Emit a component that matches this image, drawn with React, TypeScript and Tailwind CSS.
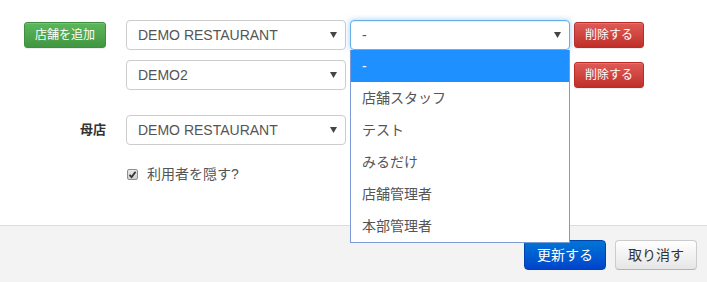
import React from "react";

const FONT = '"Liberation Sans", "Noto Sans CJK JP", Arial, sans-serif';

function Arrow() {
  return (
    <svg width="7" height="6" viewBox="0 0 7 6" className="absolute right-[8px] top-1/2 -translate-y-1/2">
      <path d="M0 0 L7 0 L3.5 6 Z" fill="#444" />
    </svg>
  );
}

function Select({ value, focused }: { value: string; focused?: boolean }) {
  return (
    <div
      className={
        "relative w-[220px] h-[30px] rounded-[4px] border bg-white flex items-center pl-[11px] text-[14px] text-[#555] " +
        (focused
          ? "border-[#66afe9] shadow-[inset_0_1px_1px_rgba(0,0,0,0.075),0_0_6px_rgba(102,175,233,0.6)]"
          : "border-[#cccccc]")
      }
    >
      {value ? <span>{value}</span> : null}
      <Arrow />
    </div>
  );
}

function RedButton() {
  return (
    <button className="ml-[4px] w-[70px] h-[26px] rounded-[3px] border border-[#b92c28] bg-gradient-to-b from-[#df5a56] to-[#c12e2a] text-white text-[12px] flex items-center justify-center shadow-[inset_0_1px_0_rgba(255,255,255,0.15),0_1px_1px_rgba(0,0,0,0.075)]">
      削除する
    </button>
  );
}

const items = ["-", "店舗スタッフ", "テスト", "みるだけ", "店舗管理者", "本部管理者"];

export default function App() {
  return (
    <div className="w-[707px] h-[282px] bg-white flex flex-col" style={{ fontFamily: FONT }}>
      <div className="flex-1 pt-[20px] flex flex-col">
        {/* Row 1 */}
        <div className="flex items-center h-[30px]">
          <div className="w-[106px] pl-[24px] flex">
            <button className="w-[82px] h-[26px] rounded-[3px] border border-[#3e8f3e] bg-gradient-to-b from-[#5cb85c] to-[#419641] text-white text-[12px] flex items-center justify-center shadow-[inset_0_1px_0_rgba(255,255,255,0.15),0_1px_1px_rgba(0,0,0,0.075)]">
              店舗を追加
            </button>
          </div>
          <div className="ml-[20px]">
            <Select value="DEMO RESTAURANT" />
          </div>
          <div className="ml-[4px] relative z-10">
            <Select value="-" focused />
            <div className="absolute left-0 top-[30px] w-[220px] bg-white border border-[#7c9ad4] border-t-0">
              {items.map((it, i) => (
                <div
                  key={it}
                  className={
                    "h-[32px] flex items-center pl-[11px] text-[14px] " +
                    (i === 0 ? "bg-[#1e90ff] text-white" : "text-[#555]")
                  }
                >
                  {it}
                </div>
              ))}
            </div>
          </div>
          <RedButton />
        </div>

        {/* Row 2 */}
        <div className="flex items-center h-[30px] mt-[10px]">
          <div className="w-[106px]" />
          <div className="ml-[20px]">
            <Select value="DEMO2" />
          </div>
          <div className="ml-[4px]">
            <Select value="" />
          </div>
          <RedButton />
        </div>

        {/* Row 3 */}
        <div className="flex items-center h-[30px] mt-[25px]">
          <div className="w-[106px] text-right text-[13px] font-bold text-[#333]">母店</div>
          <div className="ml-[20px]">
            <Select value="DEMO RESTAURANT" />
          </div>
        </div>

        {/* Checkbox */}
        <div className="flex items-center h-[20px] mt-[19px] pl-[127px]">
          <span className="w-[11px] h-[11px] border border-[#8f8f8f] rounded-[2px] bg-gradient-to-b from-[#e8e8e8] to-[#cfcfcf] flex items-center justify-center">
            <svg width="9" height="9" viewBox="0 0 9 9">
              <path d="M1.5 4.8 L3.6 7 L7.6 1.8" stroke="#333" strokeWidth="1.8" fill="none" />
            </svg>
          </span>
          <span className="ml-[9px] text-[14px] text-[#555]">利用者を隠す?</span>
        </div>
      </div>

      {/* Footer */}
      <div className="h-[57px] border-t border-[#dddddd] bg-[#f3f3f3] flex items-start justify-end pt-[14px] pr-[10px]">
        <button className="w-[82px] h-[30px] rounded-[4px] border border-[#0044aa] bg-gradient-to-b from-[#0075d6] to-[#0044cc] text-white text-[14px] flex items-center justify-center">
          更新する
        </button>
        <button className="ml-[9px] w-[82px] h-[30px] rounded-[4px] border border-[#cccccc] border-b-[#b3b3b3] bg-gradient-to-b from-[#ffffff] to-[#e6e6e6] text-[#333] text-[14px] flex items-center justify-center">
          取り消す
        </button>
      </div>
    </div>
  );
}
